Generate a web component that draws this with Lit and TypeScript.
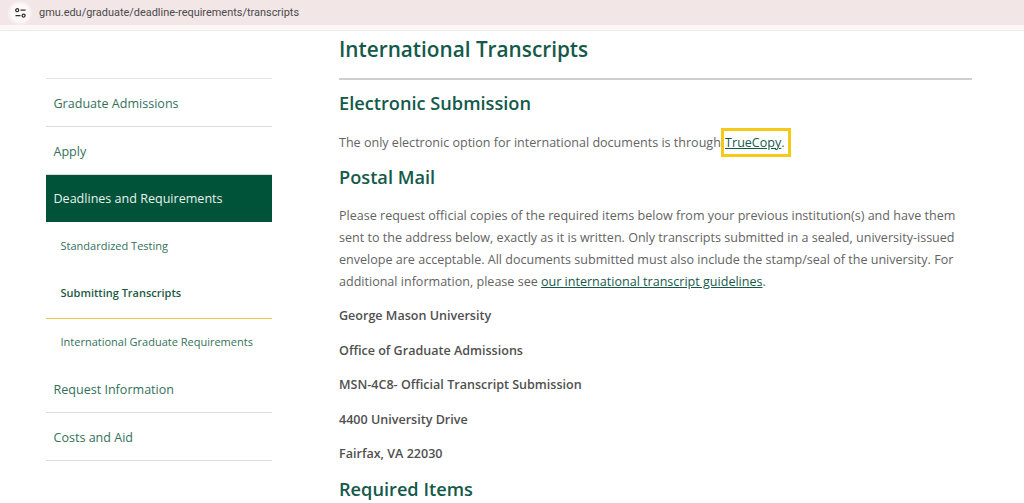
import { LitElement, html, css } from "lit";
import { customElement } from "lit/decorators.js";

@customElement("app-root")
export class AppRoot extends LitElement {
  static styles = css`
    :host { display: block; width: 1024px; height: 503px; overflow: hidden; background: #fff; font-family: "Open Sans", sans-serif; color: #636363; }
    * { box-sizing: border-box; }
    .chrome { height: 31px; background: #fdf8f6; border-bottom: 1px solid #eeeded; }
    .url { height: 25px; background: #f2e6e7; display: flex; align-items: center; font-family: Roboto, sans-serif; font-size: 10.95px; color: #4a4a4a; padding-left: 10px; gap: 9px; }
    .ico { width: 20px; height: 20px; border-radius: 50%; background: #fdf9f9; display: flex; align-items: center; justify-content: center; box-shadow: 0 0 0 2px #f8eeee; }
    .url span { margin-top: -1px; }
    .page { display: grid; grid-template-columns: 226px 633px; column-gap: 67px; padding-left: 46px; }
    nav { margin-top: 47px; border-top: 1px solid #e3e3e3; display: flex; flex-direction: column; }
    nav a { display: flex; align-items: center; color: #35705c; }
    .top { height: 48px; font-size: 12.55px; padding: 2px 0 0 7.5px; border-bottom: 1px solid #dcdcdc; }
    nav .active { height: 47px; font-size: 12.55px; padding: 0 0 1px 7.5px; background: #005239; color: #e6f2ee; }
    .sub { font-size: 11px; padding: 0 0 2px 14.5px; height: 48px; }
    nav .cur { font-weight: 600; color: #1d5a45; height: 49px; border-bottom: 1px solid #efc64a; padding-bottom: 4px; }
    nav .intl { height: 47px; padding-bottom: 3px; }
    nav .req-info { height: 47px; padding-top: 0; }
    main { min-width: 0; }
    h1, h2 { margin: 0; font-weight: 600; color: #14594a; }
    h1 { font-size: 20.75px; line-height: 29px; margin-top: 4px; height: 45px; border-bottom: 2px solid #cfcfcf; }
    h2 { font-size: 18.2px; line-height: 25px; }
    .e { margin-top: 11px; }
    p { margin: 0; font-size: 12.55px; line-height: 22px; }
    .one { margin-top: 16px; white-space: nowrap; }
    .pm { margin-top: 11px; }
    .long { margin-top: 15px; }
    .long a, .one a { color: #14594a; text-decoration: underline; }
    .box { outline: 3px solid #f5c918; padding: 3px 3px 3px 1px; }
    .addr { font-weight: 600; color: #505050; margin-top: 12.5px; line-height: 22px; }
    .addr.first { margin-top: 12px; }
    .req { margin-top: 12px; }
  `;
  render() {
    return html`
      <div class="chrome">
        <div class="url">
          <div class="ico"><svg width="11" height="10" viewBox="0 0 11 10" fill="none" stroke="#333" stroke-width="1.3"><circle cx="2.2" cy="2.2" r="1.5"/><path d="M5.5 2.2H10.5M0.5 7.6H5.5"/><circle cx="8.6" cy="7.6" r="1.5"/></svg></div>
          <span>gmu.edu/graduate/deadline-requirements/transcripts</span>
        </div>
      </div>
      <div class="page">
        <nav>
          <a class="top">Graduate Admissions</a>
          <a class="top">Apply</a>
          <a class="active">Deadlines and Requirements</a>
          <a class="sub">Standardized Testing</a>
          <a class="sub cur">Submitting Transcripts</a>
          <a class="sub intl">International Graduate Requirements</a>
          <a class="top req-info">Request Information</a>
          <a class="top">Costs and Aid</a>
        </nav>
        <main>
          <h1>International Transcripts</h1>
          <h2 class="e">Electronic Submission</h2>
          <p class="one">The only electronic option for international documents is through <span class="box"><a>TrueCopy</a>.</span></p>
          <h2 class="pm">Postal Mail</h2>
          <p class="long">Please request official copies of the required items below from your previous institution(s) and have them sent to the address below, exactly as it is written. Only transcripts submitted in a sealed, university-issued envelope are acceptable. All documents submitted must also include the stamp/seal of the university. For additional information, please see <a>our international transcript guidelines</a>.</p>
          <p class="addr first">George Mason University</p>
          <p class="addr">Office of Graduate Admissions</p>
          <p class="addr">MSN-4C8- Official Transcript Submission</p>
          <p class="addr">4400 University Drive</p>
          <p class="addr">Fairfax, VA 22030</p>
          <h2 class="req">Required Items</h2>
        </main>
      </div>
    `;
  }
}
